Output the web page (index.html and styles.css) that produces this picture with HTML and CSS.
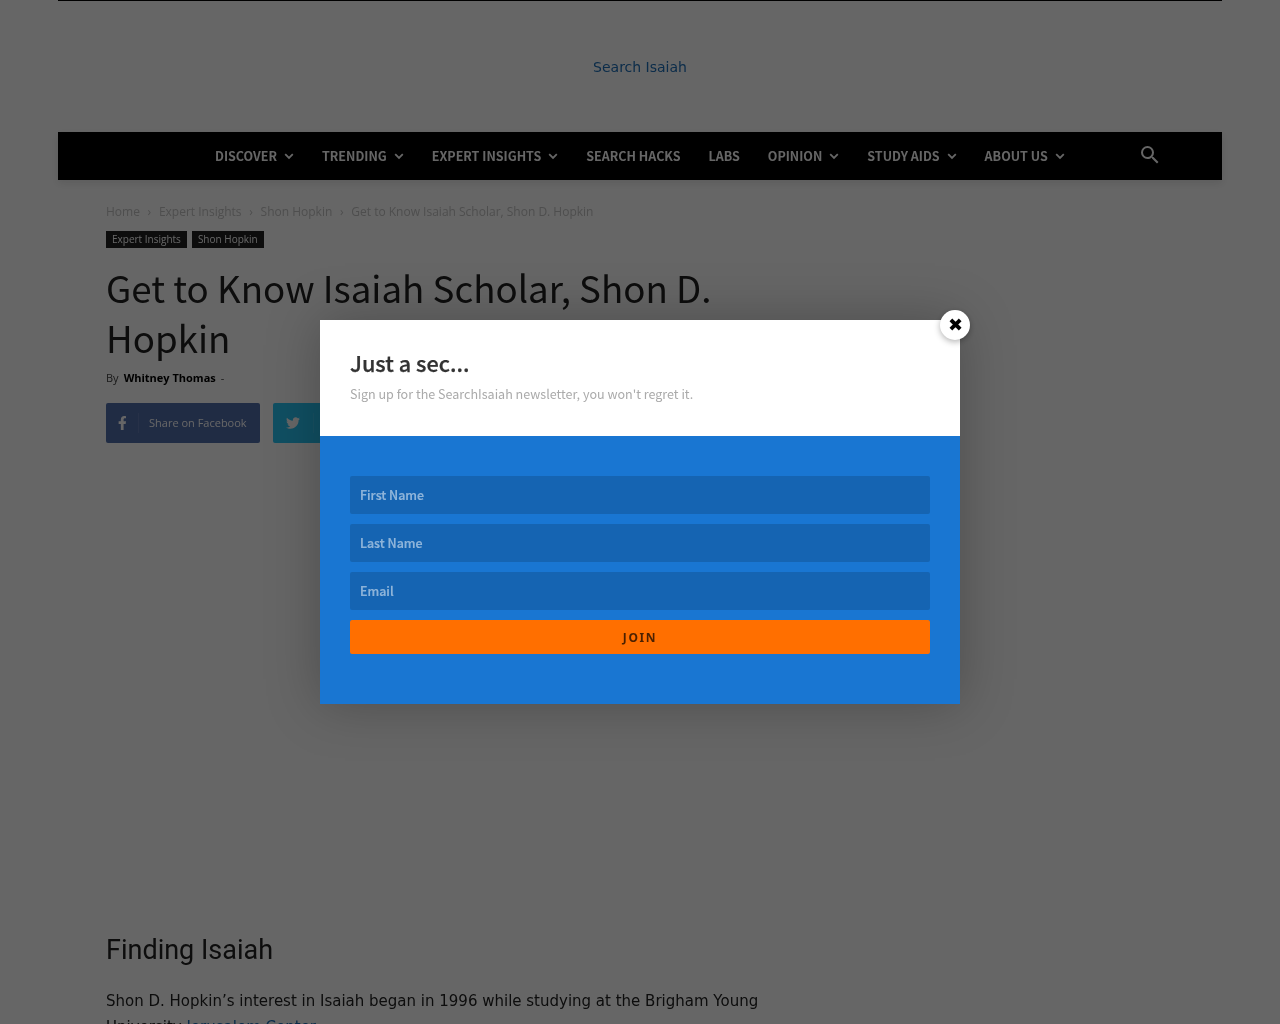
FILE: index.html
```html
<!DOCTYPE html>
<html lang="en">
<head>
<meta charset="utf-8">
<title>Get to Know Isaiah Scholar, Shon D. Hopkin</title>
<link rel="stylesheet" href="styles.css">
</head>
<body>
<div class="page">
  <header class="site-header">
    <a class="logo-link" href="#">Search Isaiah</a>
  </header>
  <nav class="main-nav">
    <ul class="menu">
      <li class="menu-item">DISCOVER<svg class="chev" viewBox="0 0 10 7"><path d="M1.2 1.2 5 5l3.8-3.8"/></svg></li>
      <li class="menu-item">TRENDING<svg class="chev" viewBox="0 0 10 7"><path d="M1.2 1.2 5 5l3.8-3.8"/></svg></li>
      <li class="menu-item">EXPERT INSIGHTS<svg class="chev" viewBox="0 0 10 7"><path d="M1.2 1.2 5 5l3.8-3.8"/></svg></li>
      <li class="menu-item">SEARCH HACKS</li>
      <li class="menu-item">LABS</li>
      <li class="menu-item">OPINION<svg class="chev" viewBox="0 0 10 7"><path d="M1.2 1.2 5 5l3.8-3.8"/></svg></li>
      <li class="menu-item">STUDY AIDS<svg class="chev" viewBox="0 0 10 7"><path d="M1.2 1.2 5 5l3.8-3.8"/></svg></li>
      <li class="menu-item">ABOUT US<svg class="chev" viewBox="0 0 10 7"><path d="M1.2 1.2 5 5l3.8-3.8"/></svg></li>
    </ul>
    <svg class="search-icon" viewBox="0 0 24 24"><path d="M15.5 14h-.79l-.28-.27A6.47 6.47 0 0 0 16 9.5 6.5 6.5 0 1 0 9.5 16c1.61 0 3.09-.59 4.23-1.57l.27.28v.79l5 4.99L20.49 19l-4.99-5zm-6 0C7.01 14 5 11.99 5 9.5S7.01 5 9.5 5 14 7.01 14 9.5 11.99 14 9.5 14z"/></svg>
  </nav>
  <main class="article">
    <div class="crumbs">
      <span>Home</span><i>›</i><span>Expert Insights</span><i>›</i><span>Shon Hopkin</span><i>›</i><span>Get to Know Isaiah Scholar, Shon D. Hopkin</span>
    </div>
    <div class="tags"><span class="tag">Expert Insights</span><span class="tag">Shon Hopkin</span></div>
    <h1 class="title">Get to Know Isaiah Scholar, Shon D. Hopkin</h1>
    <div class="meta"><span>By</span><b>Whitney Thomas</b><span>-</span></div>
    <div class="share">
      <div class="share-btn fb">
        <span class="share-ico"><svg viewBox="0 0 320 512"><path d="M279.14 288l14.22-92.66h-88.91v-60.13c0-25.35 12.42-50.06 52.24-50.06h40.42V6.26S260.43 0 225.36 0c-73.22 0-121.08 44.38-121.08 124.72v70.62H22.89V288h81.39v224h100.17V288z"/></svg></span>
        <span class="share-text">Share on Facebook</span>
      </div>
      <div class="share-btn tw">
        <span class="share-ico"><svg viewBox="0 0 512 512"><path d="M459.37 151.716c.325 4.548.325 9.097.325 13.645 0 138.72-105.583 298.558-298.558 298.558-59.452 0-114.68-17.219-161.137-47.106 8.447.974 16.568 1.299 25.34 1.299 49.055 0 94.213-16.568 130.274-44.832-46.132-.975-84.792-31.188-98.112-72.772 6.498.974 12.995 1.624 19.818 1.624 9.421 0 18.843-1.3 27.614-3.573-48.081-9.747-84.143-51.98-84.143-102.985v-1.299c13.969 7.797 30.214 12.67 47.431 13.319-28.264-18.843-46.781-51.005-46.781-87.391 0-19.492 5.197-37.36 14.294-52.954 51.655 63.675 129.3 105.258 216.365 109.807-1.624-7.797-2.599-15.918-2.599-24.04 0-57.828 46.782-104.934 104.934-104.934 30.213 0 57.502 12.67 76.67 33.137 23.715-4.548 46.456-13.32 66.599-25.34-7.798 24.366-24.366 44.833-46.132 57.827 21.117-2.273 41.584-8.122 60.426-16.243-14.292 20.791-32.161 39.308-52.628 54.253z"/></svg></span>
        <span class="share-text">Twitter</span>
      </div>
    </div>
    <div class="media-space"></div>
    <h2 class="section-head">Finding Isaiah</h2>
    <p class="body-text">Shon D. Hopkin’s interest in Isaiah began in 1996 while studying at the Brigham Young University <a href="#">Jerusalem Center</a>.</p>
  </main>
</div>
<div class="overlay"></div>
<div class="modal">
  <span class="close">✖</span>
  <div class="modal-top">
    <h3 class="modal-title">Just a sec...</h3>
    <p class="modal-sub">Sign up for the SearchIsaiah newsletter, you won't regret it.</p>
  </div>
  <div class="modal-form">
    <div class="field">First Name</div>
    <div class="field">Last Name</div>
    <div class="field">Email</div>
    <div class="join">JOIN</div>
  </div>
</div>
</body>
</html>
```
FILE: styles.css
```css
* { box-sizing: border-box; }
html, body { margin: 0; padding: 0; height: 1024px; overflow: hidden; background: #fff; }
body { font-family: "DejaVu Sans", sans-serif; color: #222; }

.page { width: 1164px; margin: 0 auto; border-top: 1px solid #000; will-change: transform; }
.site-header { height: 131px; display: flex; justify-content: center; align-items: center; }
.logo-link { font-size: 14px; color: #1e6fb8; text-decoration: none; }

.main-nav { height: 48px; background: #000; display: flex; align-items: center; position: relative; box-shadow: 0 3px 8px rgba(0,0,0,.1); padding-left: 143px; }
.menu { list-style: none; margin: 0; padding: 0; display: flex; }
.menu-item { display: flex; align-items: center; padding: 0 14px; color: #fff; font: 700 12.5px/48px "Noto Sans CJK SC", sans-serif; white-space: nowrap; }
.chev { width: 10px; height: 7px; margin-left: 7px; fill: none; stroke: #fff; stroke-width: 1.8; }
.search-icon { position: absolute; left: 1080px; top: 11px; width: 24px; height: 24px; fill: #fff; }

.article { padding: 0 48px; width: 792px; }
.crumbs { margin-top: 23px; height: 18px; font: 12px/18px "Open Sans", sans-serif; color: #c3c3c3; display: flex; white-space: nowrap; }
.crumbs i { font-style: normal; margin: 0 7.7px; }
.tags { margin-top: 10px; display: flex; gap: 5px; }
.tag { height: 17px; padding: 0 6px; background: #222; color: #fff; font: 10px/17px "Open Sans", sans-serif; }
.title { margin: 14px 0 0; font: 400 36.7px/50px "Noto Sans CJK SC", sans-serif; color: #222; }
.meta { margin-top: 8px; height: 16px; display: flex; gap: 5px; font: 11px/16px "Open Sans", sans-serif; color: #444; }
.meta b { color: #000; font-weight: 700; }
.share { margin-top: 17px; display: flex; gap: 13px; }
.share-btn { height: 40px; border-radius: 2px; display: flex; align-items: center; color: #fff; font: 11px/40px "Open Sans", sans-serif; }
.fb { width: 154px; background: #516eab; }
.tw { width: 120px; background: #29c5f6; }
.share-ico { height: 20px; margin-right: 10px; display: flex; align-items: center; justify-content: center; border-right: 1px solid rgba(255,255,255,.1); }
.fb .share-ico { width: 33px; }
.tw .share-ico { width: 41px; }
.share-ico svg { height: 14px; fill: #fff; }
.media-space { height: 488px; }
.section-head { margin: 0; font: 400 27px/38px Roboto, sans-serif; color: #222; }
.body-text { margin: 19px 0 0; font-size: 15px; line-height: 26px; color: #222; }
.body-text a { color: #1e6fb8; text-decoration: none; }

.overlay { position: fixed; inset: 0; background: rgba(0,0,0,.6); }
.modal { position: fixed; left: 320px; top: 320px; width: 640px; height: 384px; background: #fff; box-shadow: 0 0 50px rgba(0,0,0,.25); will-change: transform; }
.close { position: absolute; right: -10px; top: -10px; width: 30px; height: 30px; padding-left: 1px; border-radius: 50%; background: #fff; color: #000; font: 700 18px/30px "DejaVu Sans", sans-serif; text-align: center; box-shadow: 0 2px 6px rgba(0,0,0,.3); }
.modal-top { height: 116px; padding: 27px 30px 0; }
.modal-title { margin: 0; font: 500 21.7px/32px "Noto Sans CJK SC", sans-serif; color: #333; -webkit-text-stroke: .25px #333; }
.modal-sub { margin: 5px 0 0; font: 400 12.55px/20px "Noto Sans CJK SC", sans-serif; color: #aaa; }
.modal-form { height: 268px; background: #1976d2; padding: 40px 30px; display: flex; flex-direction: column; gap: 10px; }
.field { height: 38px; border-radius: 2px; padding-left: 10px; background: rgba(0,0,0,.15); color: rgba(255,255,255,.5); font: 500 12.45px/38px "Noto Sans CJK SC", sans-serif; -webkit-text-stroke: .2px rgba(255,255,255,.4); }
.join { height: 34px; padding-top: 1px; border-radius: 2px; background: #ff6f00; color: rgba(0,0,0,.7); text-align: center; font: 700 12px/34px "Noto Sans", sans-serif; letter-spacing: 1.6px; }
```
